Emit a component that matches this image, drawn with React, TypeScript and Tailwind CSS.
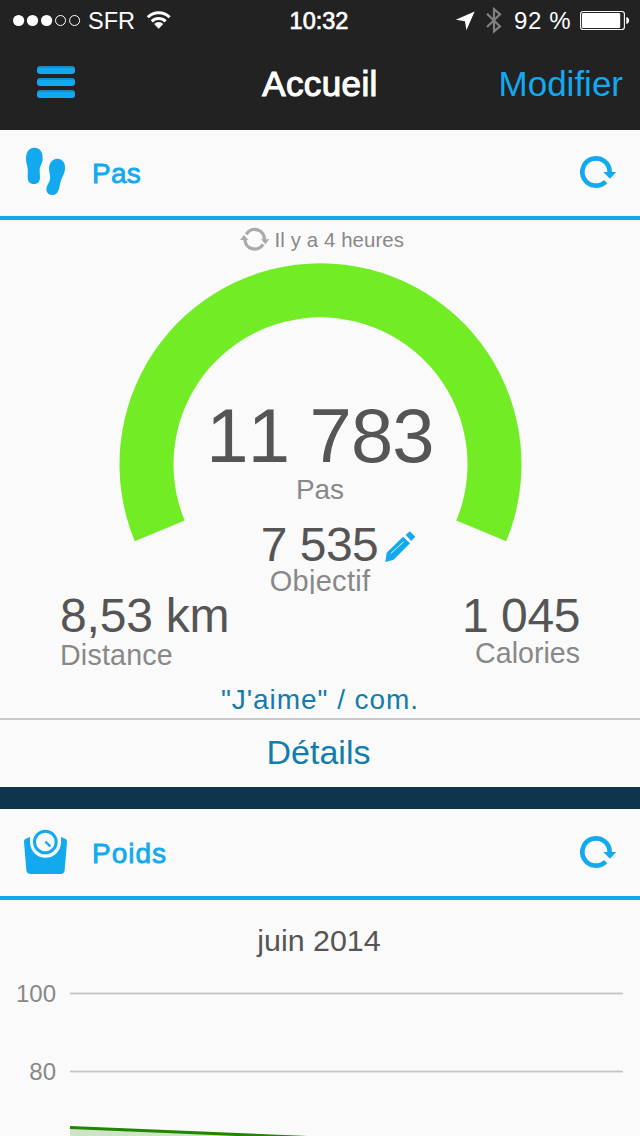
import React from "react";

function StatusBar() {
  return (
    <div className="grid h-10 grid-cols-[240px_160px_240px] text-[24px] leading-[41px] text-white">
      <div className="flex">
        <svg className="h-10 w-[88px]" viewBox="0 0 88 40">
          {[18.6, 32.5, 46.6].map((cx) => (
            <circle key={cx} cx={cx} cy="20.5" r="5.6" fill="#fff" />
          ))}
          {[60.5, 74.6].map((cx) => (
            <circle key={cx} cx={cx} cy="20.5" r="5" fill="none" stroke="#fff" strokeWidth="1" />
          ))}
        </svg>
        <span className="w-[47px] whitespace-nowrap text-[23.5px] leading-[42px]">SFR</span>
        <svg className="h-10 w-[40px]" viewBox="135 0 40 40" fill="none" stroke="#fff" strokeWidth="3">
          <path d="M147.8 17.3a15.5 15.5 0 0 1 21.8 0" />
          <path d="M151.8 21.4a9.8 9.8 0 0 1 13.8 0" />
          <path d="M158.7 28.7l-4.6-4.7a6.5 6.5 0 0 1 9.2 0z" fill="#fff" stroke="none" />
        </svg>
      </div>
      <div className="text-center text-[23.5px] leading-[42px] [-webkit-text-stroke:0.7px_#fff]">
        <span className="mr-[2px]">10:32</span>
      </div>
      <div className="flex">
        <svg className="h-10 w-[114px]" viewBox="400 0 114 40">
          <path d="M474.6 11.6l-8.2 18.6-1.4-9-9.2-1.4z" fill="#fff" />
          <path d="M487 13.8l13 12.6-6 5V9.2l6 5.2L487 27" fill="none" stroke="#808080" strokeWidth="2.2" />
        </svg>
        <span className="w-[66px] whitespace-nowrap tracking-[0.6px]">92 %</span>
        <svg className="h-10 w-[60px]" viewBox="580 0 60 40">
          <rect x="580.6" y="11.5" width="43.8" height="18" rx="2.6" fill="none" stroke="#fff" strokeWidth="1.1" />
          <rect x="582" y="13" width="38.2" height="15" rx="1" fill="#fff" />
          <path d="M626.3 17c2 .6 2.8 1.7 2.8 3.5s-.8 2.9-2.8 3.5z" fill="#fff" />
        </svg>
      </div>
    </div>
  );
}

function NavBar() {
  return (
    <div className="grid h-[90px] grid-cols-[200px_1fr_200px] text-[35px] leading-[88px]">
      <div className="flex flex-col gap-1 pt-[26px] pl-[37px]">
        {[0, 1, 2].map((i) => (
          <span key={i} className="h-2 w-[38px] rounded-[3px] border-t-2 border-[#168bc4] bg-[#13a9ef]" />
        ))}
      </div>
      <h1 className="text-center tracking-[0.4px] text-white [-webkit-text-stroke:1.1px_#fff]">Accueil</h1>
      <span className="pr-[17px] text-right text-[#13a9ef]">Modifier</span>
    </div>
  );
}

function Refresh() {
  return (
    <svg className="h-[86px] w-20" viewBox="0 0 240 258">
      <path d="M149 126a41 41 0 1 0-12 29" fill="none" stroke="#13a9ef" strokeWidth="14" />
      <path d="M130 126h39l-19 20z" fill="#13a9ef" />
    </svg>
  );
}

function Feet() {
  return (
    <svg className="h-[86px] w-[92px]" viewBox="0 0 276 258" fill="#13a9ef">
      <path d="M103 53c16 0 25 12 25 31 0 17-8 21-9 35 0 9 1 13 1 22 0 14-5 21-18 21-14 0-19-8-19-21 0-8 1-14 0-24-1-13-5-17-5-33 0-18 9-31 25-31z" />
      <path d="M172 86c16 0 25 13 23 31-2 17-9 24-13 38-2 8-3 13-5 21-4 13-10 19-20 19-13 0-20-9-17-23 2-9 8-14 10-25 2-12-3-19-3-32 1-17 11-29 25-29z" />
    </svg>
  );
}

function Scale() {
  return (
    <svg className="h-[86px] w-[92px]" viewBox="0 30 276 258">
      <path
        d="M90 111l-13 5q-6 3-5 10l7 84q1 12 13 12h90q11 0 12-12l7-84q1-8-5-10l-13-5v16a46 46 0 0 1-93 0z"
        fill="#13a9ef"
      />
      <circle cx="136" cy="126" r="32.5" fill="#fafafa" stroke="#13a9ef" strokeWidth="9" />
      <path d="M136 125l15 14" stroke="#13a9ef" strokeWidth="7" />
    </svg>
  );
}

function Sync() {
  return (
    <svg className="h-10 w-[35px]" viewBox="60 0 105 120" fill="none" stroke="#aaa" strokeWidth="10">
      <path d="M79 43a29 29 0 0 1 54 17" />
      <path d="M75 57a29 29 0 0 0 54 16" />
      <path d="M123 58h25l-12 15zM85 60H60l12-15z" fill="#aaa" stroke="none" />
    </svg>
  );
}

function Pencil() {
  return (
    <svg className="h-12 w-[34px]" viewBox="856 423 102 144" fill="#13a9ef">
      <path d="M860 546l4-28 49-48 21 20-49 49z" />
      <path d="M921 465l12-11 17 16-12 13z" />
      <path d="M877 520l38-35" stroke="#fafafa" strokeWidth="2.6" />
    </svg>
  );
}

function CardHeader({ icon, title }: { icon: React.ReactNode; title: React.ReactNode }) {
  return (
    <header className="flex h-[90px] items-center border-b-4 border-[#13a9ef] text-[#13a9ef]">
      {icon}
      <h2 className="flex-1 text-[28px] leading-[87px] [-webkit-text-stroke:0.8px_#13a9ef]">{title}</h2>
      <Refresh />
    </header>
  );
}

function StepsCard() {
  return (
    <section className="bg-[#fafafa]">
      <CardHeader icon={<Feet />} title={<span className="tracking-[0.3px]">Pas</span>} />
      <div className="flex h-10 pl-[240px] text-[20.4px] leading-10 text-[#888]">
        <Sync />
        <span className="-ml-[0.5px] tracking-[0.1px]">Il y a 4 heures</span>
      </div>
      <div className="grid h-[334px] grid-cols-1 overflow-hidden">
        <svg className="h-[334px] w-[640px] [grid-area:1/1]" viewBox="0 260 640 334">
          <path d="M134.8 541.2A201 201 0 1 1 506.2 541.2L456.3 520.6A147 147 0 1 0 184.7 520.6Z" fill="#72ec25" />
        </svg>
        <div className="flex flex-col items-center pt-[138px] text-[#888] [grid-area:1/1]">
          <div className="text-[76px] leading-[76px] tracking-[-0.8px] text-[#555] [font-kerning:none]">11 783</div>
          <div className="text-[28px] leading-[32px]">Pas</div>
          <div className="mt-[15px] flex h-12 pl-[39px] text-[48px] leading-[48px] text-[#555]">
            <span className="mr-[6px] tracking-[-0.5px]">7 535</span>
            <Pencil />
          </div>
          <div className="text-[29px] leading-[25px] tracking-[0.3px]">Objectif</div>
        </div>
      </div>
      <div className="flex h-[79px] justify-between px-[60px] text-[28.6px] text-[#888]">
        <div>
          <div className="text-[48px] leading-[44px] tracking-[-0.2px] text-[#555]">8,53 km</div>
          <div className="leading-[35px] tracking-[0.2px]">Distance</div>
        </div>
        <div className="text-right">
          <div className="text-[48px] leading-[44px] tracking-[-0.4px] text-[#555]">1 045</div>
          <div className="leading-[31px]">Calories</div>
        </div>
      </div>
      <div className="h-[45px] pt-[12px] text-center text-[28px] leading-[30px] tracking-[0.95px] text-[#117dad]">
        "J'aime" / com.
      </div>
      <div className="h-[69px] border-t-2 border-[#c8c8c8] text-center text-[34px] leading-[65px] text-[#117dad]">
        <span className="mr-[3px]">Détails</span>
      </div>
    </section>
  );
}

function WeightCard() {
  return (
    <section className="bg-[#fafafa] pt-px">
      <CardHeader icon={<Scale />} title={<span className="tracking-[1px]">Poids</span>} />
      <div className="h-20 text-center text-[30.4px] leading-[80px] text-[#555]">
        <span className="mr-[2px]">juin 2014</span>
      </div>
      <div className="flex h-[157px]">
        <div className="flex w-[70px] flex-col gap-[50px] pr-[14px] text-right text-[24px] leading-7 text-[#888]">
          <span>100</span>
          <span>80</span>
        </div>
        <svg className="h-[157px] w-[570px]" viewBox="70 980 570 157">
          <path d="M70 993.5H623M70 1071.5H623" stroke="#e4e4e4" strokeWidth="3" />
          <path d="M70 993.5H623M70 1071.5H623" stroke="#c4c4c4" strokeWidth="1.2" />
          <path d="M70 1127.5L320 1138H70z" fill="#cfe3c7" />
          <path d="M70 1127.5L320 1138" stroke="#218500" strokeWidth="3" />
        </svg>
      </div>
    </section>
  );
}

export default function App() {
  return (
    <main className="h-[1136px] w-[640px] overflow-hidden bg-[#0f344e] font-['Liberation_Sans',Arial,sans-serif]">
      <div className="bg-[#222]">
        <StatusBar />
        <NavBar />
      </div>
      <div className="flex flex-col gap-[22px]">
        <StepsCard />
        <WeightCard />
      </div>
    </main>
  );
}
